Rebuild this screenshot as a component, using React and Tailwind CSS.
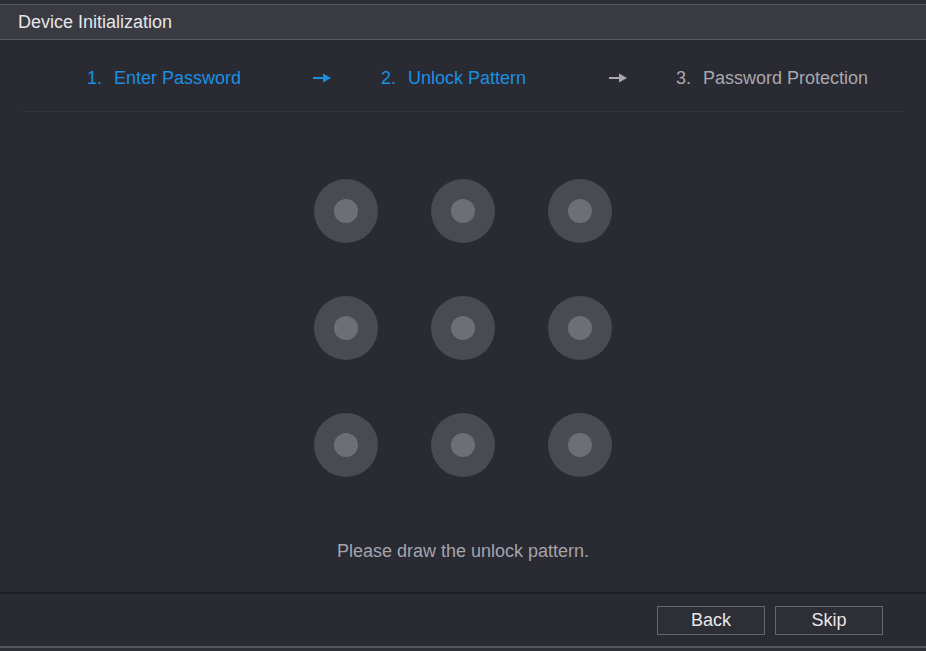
import React from "react";

const Arrow = ({ className }) => (
  <svg width="18" height="10" viewBox="0 0 18 10" className={className}>
    <rect x="0" y="4" width="11" height="2" fill="currentColor" />
    <polygon points="10,0.5 18,5 10,9.5" fill="currentColor" />
  </svg>
);

const Dot = () => (
  <div className="w-[64px] h-[64px] rounded-full bg-[#4a4a52] flex items-center justify-center">
    <div className="w-[24px] h-[24px] rounded-full bg-[#6e6e76]" />
  </div>
);

const App = () => {
  return (
    <div
      className="w-[926px] h-[651px] bg-[#2a2a33] flex flex-col overflow-hidden"
      style={{ fontFamily: '"Liberation Sans", Arial, sans-serif' }}
    >
      {/* title bar */}
      <div className="h-[4px] bg-[#2e2e35]" />
      <div className="h-[36px] bg-[#3a3a42] border-t border-b border-[#56565e] flex items-center pl-[18px]">
        <p className="text-[18px] text-[#e6e6e6] leading-none -mt-px">Device Initialization</p>
      </div>

      {/* steps */}
      <div className="h-[71px] flex items-center pl-[87px] pt-[5px] text-[18px] leading-none">
        <div className="w-[226px] flex text-[#1a90e2]">
          <span>1.</span>
          <span className="ml-[12px]">Enter Password</span>
        </div>
        <div className="w-[68px] text-[#1a90e2]">
          <Arrow />
        </div>
        <div className="w-[228px] flex text-[#1a90e2]">
          <span>2.</span>
          <span className="ml-[12px]">Unlock Pattern</span>
        </div>
        <div className="w-[67px] text-[#a8a8ae]">
          <Arrow />
        </div>
        <div className="flex text-[#a8a8ae]">
          <span>3.</span>
          <span className="ml-[12px]">Password Protection</span>
        </div>
      </div>
      <div className="h-px bg-[#35353e] ml-[22px] mr-[21px]" />

      {/* pattern */}
      <div className="h-[480px] flex flex-col items-center">
        <div className="grid grid-cols-3 gap-x-[53px] gap-y-[53px] mt-[67px]">
          {Array.from({ length: 9 }).map((_, i) => (
            <Dot key={i} />
          ))}
        </div>
        <p className="mt-[65px] text-[18px] text-[#a4a4ab] leading-none">
          Please draw the unlock pattern.
        </p>
      </div>

      {/* footer */}
      <div className="h-[2px] bg-[#1f1f27]" />
      <div className="h-[52px] flex items-center justify-end pr-[43px] gap-[10px]">
        <button className="w-[108px] h-[29px] border border-[#66666e] bg-[#2e2e37] text-[18px] text-[#e8e8e8] leading-none">
          Back
        </button>
        <button className="w-[108px] h-[29px] border border-[#66666e] bg-[#2e2e37] text-[18px] text-[#e8e8e8] leading-none">
          Skip
        </button>
      </div>
      <div className="h-[2px] bg-[#56565e]" />
      <div className="flex-1 bg-[#2e2e35]" />
    </div>
  );
};

export default App;
